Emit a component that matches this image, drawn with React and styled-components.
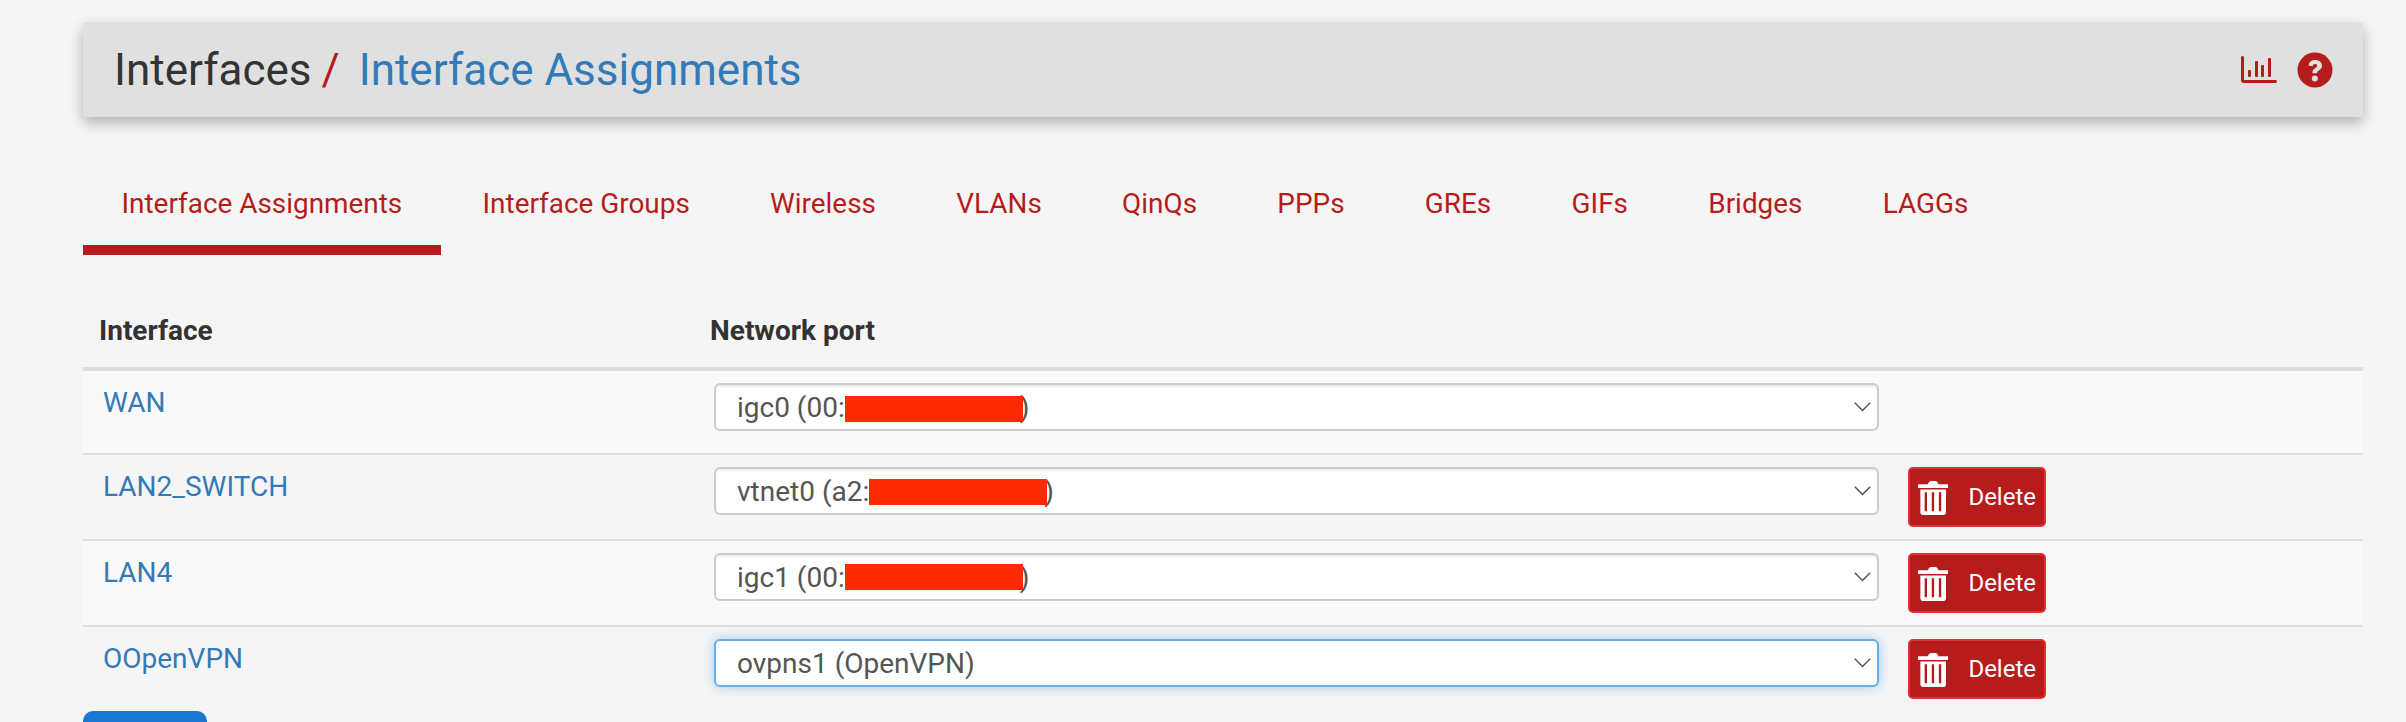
import React from "react"
import styled, { createGlobalStyle } from "styled-components"

const GlobalStyle = createGlobalStyle`
html, body {
  margin: 0;
  padding: 0;
  background: #f5f5f5;
  overflow: hidden;
}
* {
  box-sizing: border-box;
}
`

const tabs = ["Interface Assignments", "Interface Groups", "Wireless", "VLANs", "QinQs", "PPPs", "GREs", "GIFs", "Bridges", "LAGGs"]

const rows = [
  { name: "WAN", port: "igc0 (00:", hidden: true, shift: 0 },
  { name: "LAN2_SWITCH", port: "vtnet0 (a2:", hidden: true, shift: -1, remove: true },
  { name: "LAN4", port: "igc1 (00:", hidden: true, shift: -2, remove: true },
  { name: "OOpenVPN", port: "ovpns1 (OpenVPN)", focused: true, remove: true },
]

function ChartIcon() {
  return (
    <svg width="36" height="28" viewBox="0 0 36 28" fill="#b71c1c">
      <path d="M0 1.500C0 .7.6 0 1.500 0S3 .7 3 1.500V24h31.500c.8 0 1.500.7 1.500 1.500s-.7 1.500-1.500 1.500H2.500C1.100 27 0 25.900 0 24.500Z" />
      <rect x="7" y="14" width="3" height="7" rx="1" />
      <rect x="14" y="5" width="3" height="16" rx="1" />
      <rect x="20" y="9" width="3" height="12" rx="1" />
      <rect x="27" y="2" width="3" height="19" rx="1" />
    </svg>
  )
}

function HelpIcon() {
  return (
    <svg width="36" height="36" viewBox="0 0 36 36">
      <circle cx="18" cy="18" r="17.500" fill="#b71c1c" />
      <path d="M11.500 13.500C12 9.800 14.700 8 18.200 8c3.900 0 6.800 2.300 6.800 5.600 0 2.700-1.500 3.900-3.200 5-1.300.8-1.700 1.300-1.700 2.600h-4.700c0-2.900 1-4.200 2.900-5.300 1.200-.7 1.900-1.200 1.900-2.200 0-1-.9-1.700-2.100-1.700-1.400 0-2.200.8-2.500 2.300Z" fill="#e0e0e0" />
      <circle cx="17.800" cy="26.500" r="3" fill="#e0e0e0" />
    </svg>
  )
}

function TrashIcon() {
  return (
    <svg width="32" height="37" viewBox="0 0 32 37" fill="#fff">
      <path d="M0 4.500h10.500C11 2.500 12 1 14 1h4c2 0 3 1.500 3.500 3.500H32V8.500H0Z" />
      <path fillRule="evenodd" d="M2.500 10h27v24c0 1.700-1.300 3-3 3h-21c-1.700 0-3-1.300-3-3ZM7 13v20h2.500V13Zm7.500 0v20h2.500V13Zm7.500 0v20h2.500V13Z" />
    </svg>
  )
}

function Chevron() {
  return (
    <svg width="17" height="10" viewBox="0 0 17 10" fill="none" stroke="#555" strokeWidth="1.500">
      <path d="M.8.8l7.700 7.700L16.200.8" />
    </svg>
  )
}

export default function App() {
  return (
    <>
      <GlobalStyle />
      <Page>
        <Header>
          <Crumbs>
            Interfaces<Slash>/</Slash><CrumbLink>Interface Assignments</CrumbLink>
          </Crumbs>
          <HeaderIcons>
            <ChartIcon />
            <HelpIcon />
          </HeaderIcons>
        </Header>
        <Tabs>
          {tabs.map((tab, i) => (
            <Tab key={tab} $active={i === 0}>{tab}</Tab>
          ))}
        </Tabs>
        <TableHead>
          <HeadCell>Interface</HeadCell>
          <HeadCell>Network port</HeadCell>
        </TableHead>
        {rows.map((row, i) => (
          <Row key={row.name} $odd={i % 2 === 0} $last={i === rows.length - 1}>
            <RowName>{row.name}</RowName>
            <SelectBox $focused={row.focused}>
              <span>
                {row.port}
                {row.hidden && <><Redaction $shift={row.shift} />)</>}
              </span>
              <Chevron />
            </SelectBox>
            {row.remove && (
              <DeleteButton>
                <TrashIcon />
                Delete
              </DeleteButton>
            )}
          </Row>
        ))}
        <SaveButton />
      </Page>
    </>
  )
}

const Page = styled.div`
width: 2406px;
height: 722px;
overflow: hidden;
padding: 22px 43px 0 83px;
font-family: Roboto, "Liberation Sans", sans-serif;
`

const Header = styled.div`
display: flex;
align-items: center;
justify-content: space-between;
height: 95px;
padding: 0 30px 0 31px;
background: #e0e0e0;
border-radius: 3px;
box-shadow: 0 6px 14px rgba(0,0,0,0.28);
`

const Crumbs = styled.h1`
margin: 0;
font-size: 44px;
font-weight: 400;
color: #333;
`

const Slash = styled.span`
color: #b71c1c;
margin: 0 19px 0 10px;
`

const CrumbLink = styled.span`
color: #337ab7;
`

const HeaderIcons = styled.div`
display: flex;
align-items: center;
gap: 20px;
`

const Tabs = styled.div`
display: flex;
margin-top: 48px;
`

const Tab = styled.div`
height: 90px;
padding: 0 38.5px;
margin-right: 3.3px;
font-size: 27.9px;
line-height: 78px;
color: #b71c1c;
border-bottom: ${p => (p.$active ? "10px solid #b71c1c" : "none")};
`

const TableHead = styled.div`
display: grid;
grid-template-columns: 611px 1fr;
height: 78px;
padding: 0 16px;
align-items: center;
margin-top: 38px;
border-bottom: 4px solid #ddd;
`

const HeadCell = styled.div`
font-size: 28px;
font-weight: 700;
color: #333;
`

const Row = styled.div`
display: flex;
align-items: flex-start;
min-height: 84px;
padding: 12px 0 ${p => (p.$last ? "0" : "12px")} 20px;
background: ${p => (p.$odd ? "#f9f9f9" : "#f5f5f5")};
border-bottom: ${p => (p.$last ? "none" : "2px solid #ddd")};
`

const RowName = styled.a`
width: 611px;
color: #337ab7;
font-size: 28px;
line-height: 40px;
`

const SelectBox = styled.div`
display: flex;
align-items: center;
justify-content: space-between;
width: 1165px;
height: 48px;
padding: 0 6px 0 21px;
background: #fff;
border: 2px solid ${p => (p.$focused ? "#66afe9" : "#ccc")};
border-radius: 6px;
font-size: 28px;
color: #555;
box-shadow: ${p => (p.$focused ? "0 0 12px rgba(102,175,233,0.6)" : "inset 0 2px 2px rgba(0,0,0,0.07)")};
`

const Redaction = styled.span`
display: inline-block;
width: 178px;
height: 26px;
margin-right: -3px;
background: #ff2a00;
vertical-align: middle;
transform: translateY(${p => p.$shift}px);
`

const DeleteButton = styled.div`
display: flex;
align-items: center;
gap: 20px;
width: 138px;
height: 60px;
margin-left: 29px;
padding: 0 8px;
background: #b71c1c;
border: 2px solid #d33;
border-radius: 5px;
color: #fff;
font-size: 24px;
`

const SaveButton = styled.div`
width: 124px;
height: 60px;
background: #1976d2;
border-radius: 10px 10px 0 0;
`
